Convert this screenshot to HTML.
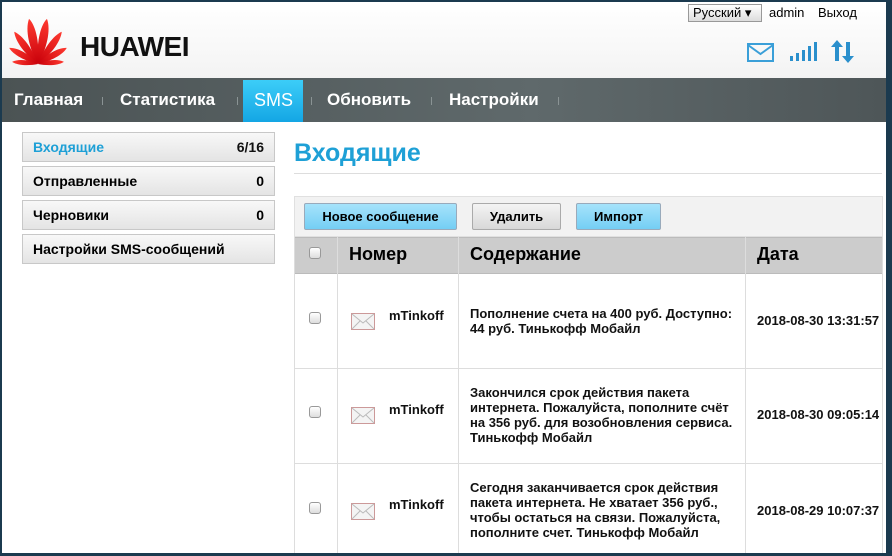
<!DOCTYPE html>
<html><head><meta charset="utf-8"><style>
*{margin:0;padding:0;box-sizing:border-box}
body{width:892px;height:556px;overflow:hidden;background:#1b3a4f;font-family:"Liberation Sans",sans-serif;position:relative}
.page{position:absolute;left:2px;top:2px;width:884px;height:551px;background:#fff;overflow:hidden}
.abs{position:absolute}
.hdr{left:0;top:0;width:884px;height:76px;background:linear-gradient(#fff,#f3f3f3)}
.nav{left:0;top:76px;width:884px;height:44px;background:linear-gradient(90deg,#4b5354,#5f696b 60%,#4e5658)}
.nav span{position:absolute;top:0;height:44px;line-height:44px;color:#fff;font-weight:bold;font-size:17px}
.sep{position:absolute;top:19px;width:1px;height:8px;background:#8a9394}
.side{position:absolute;left:20px;width:253px;height:30px;border:1px solid #c8c8c8;background:linear-gradient(#f8f8f8,#e4e4e4);font-size:14px;font-weight:bold;line-height:28px;padding:0 10px}
.side b{float:right}
.btn{position:absolute;top:201px;height:27px;border:1px solid #9ab;border-radius:2px;font-size:13px;font-weight:bold;line-height:25px;text-align:center}
.col{position:absolute;top:235px;width:1px;height:320px;background:#ddd}
.hrow{position:absolute;left:293px;width:588px;height:1px;background:#ddd}
.cb{position:absolute;width:12px;height:12px;border:1px solid #999;border-radius:3px;background:linear-gradient(#fff,#ddd)}
.t{position:absolute;font-size:13px;font-weight:bold;color:#111;line-height:15px}
.env{position:absolute;width:24px;height:17px}
</style></head><body><div class="page">
<div class="abs hdr"></div>
<svg class="abs" style="left:4px;top:10px" width="66" height="54" viewBox="0 0 66 54">
<defs><linearGradient id="g" x1="0" y1="1" x2="0" y2="0"><stop offset="0" stop-color="#c8000a"/><stop offset="1" stop-color="#ff3a30"/></linearGradient></defs>
<g fill="url(#g)" transform="translate(32,52)">
<path d="M0 0 C-6 -16 -7 -36 -1 -46 C5 -38 5 -18 0 0Z" transform="rotate(-10)"/>
<path d="M0 0 C-6 -16 -7 -36 -1 -46 C5 -38 5 -18 0 0Z" transform="rotate(10) scale(-1,1)"/>
<path d="M0 0 C-5 -14 -6 -31 -1 -40 C4 -32 4 -15 0 0Z" transform="rotate(-35)"/>
<path d="M0 0 C-5 -14 -6 -31 -1 -40 C4 -32 4 -15 0 0Z" transform="rotate(35) scale(-1,1)"/>
<path d="M0 0 C-4 -12 -5 -26 -1 -33 C4 -26 4 -12 0 0Z" transform="rotate(-59)"/>
<path d="M0 0 C-4 -12 -5 -26 -1 -33 C4 -26 4 -12 0 0Z" transform="rotate(59) scale(-1,1)"/>
<path d="M0 0 C-3 -9 -4 -20 -1 -26 C3 -20 3 -9 0 0Z" transform="rotate(-83)"/>
<path d="M0 0 C-3 -9 -4 -20 -1 -26 C3 -20 3 -9 0 0Z" transform="rotate(83) scale(-1,1)"/>
</g></svg>
<div class="abs" style="left:78px;top:29px;font-size:28px;font-weight:bold;color:#111;letter-spacing:-0.5px">HUAWEI</div>
<div class="abs" style="left:686px;top:2px;width:74px;height:18px;border:1px solid #999;background:linear-gradient(#fff,#ddd);font-size:13px;line-height:16px;padding-left:4px">Русский ▾</div>
<div class="abs" style="left:767px;top:3px;font-size:13px">admin</div>
<div class="abs" style="left:816px;top:3px;font-size:13px">Выход</div>
<svg class="abs" style="left:745px;top:41px" width="28" height="20"><rect x="1" y="1" width="25" height="17" fill="none" stroke="#3a9fd8" stroke-width="2"/><path d="M1 2 L13.5 11 L26 2" fill="none" stroke="#3a9fd8" stroke-width="2"/></svg>
<svg class="abs" style="left:788px;top:39px" width="28" height="22" fill="#2a8fcc"><rect x="0" y="15" width="3" height="5"/><rect x="6" y="12" width="3" height="8"/><rect x="12" y="9" width="3" height="11"/><rect x="18" y="5" width="3" height="15"/><rect x="24" y="1" width="3" height="19"/></svg>
<svg class="abs" style="left:829px;top:38px" width="24" height="24" fill="#2a8fcc"><path d="M6 0 L12 7 H8 V21 H4 V7 H0Z"/><path d="M17 23 L11 16 H15 V2 H19 V16 H23Z"/></svg>
<div class="abs nav">
<span style="left:12px">Главная</span><div class="sep" style="left:100px"></div>
<span style="left:118px">Статистика</span><div class="sep" style="left:235px"></div>
<div class="abs" style="left:241px;top:2px;width:60px;height:42px;background:linear-gradient(#3ccdf8,#14a6e4)"></div>
<span style="left:252px;font-weight:normal;font-size:18px">SMS</span><div class="sep" style="left:309px"></div>
<span style="left:325px">Обновить</span><div class="sep" style="left:429px"></div>
<span style="left:447px">Настройки</span><div class="sep" style="left:556px"></div>
</div>
<div class="side" style="top:130px;color:#1ea0d6">Входящие<b style="color:#111">6/16</b></div>
<div class="side" style="top:164px">Отправленные<b>0</b></div>
<div class="side" style="top:198px">Черновики<b>0</b></div>
<div class="side" style="top:232px">Настройки SMS-сообщений</div>
<div class="abs" style="left:292px;top:137px;font-size:25px;font-weight:bold;color:#1ea0d6">Входящие</div>
<div class="abs" style="left:292px;top:171px;width:588px;height:1px;background:#ddd"></div>
<div class="abs" style="left:292px;top:194px;width:589px;height:41px;background:#f2f2f2;border:1px solid #e0e0e0"></div>
<div class="btn" style="left:302px;width:153px;background:linear-gradient(#a6e3fb,#74cef4)">Новое сообщение</div>
<div class="btn" style="left:470px;width:89px;background:linear-gradient(#f4f4f4,#d8d8d8);border-color:#aaa">Удалить</div>
<div class="btn" style="left:574px;width:85px;background:linear-gradient(#a6e3fb,#74cef4)">Импорт</div>
<div class="abs" style="left:292px;top:235px;width:589px;height:37px;background:#ccc;border:1px solid #bbb"></div>
<div class="cb" style="left:307px;top:245px"></div>
<div class="abs" style="left:347px;top:242px;font-size:18px;font-weight:bold">Номер</div>
<div class="abs" style="left:468px;top:242px;font-size:18px;font-weight:bold">Содержание</div>
<div class="abs" style="left:755px;top:242px;font-size:18px;font-weight:bold">Дата</div>
<div class="col" style="left:292px"></div><div class="col" style="left:335px"></div><div class="col" style="left:456px"></div><div class="col" style="left:743px"></div><div class="col" style="left:880px"></div>
<div class="hrow" style="top:366px"></div><div class="hrow" style="top:461px"></div>

<div class="cb" style="left:307px;top:310px"></div>
<svg class="env" style="left:349px;top:311px"><rect x="0.5" y="0.5" width="23" height="16" fill="#f4f4f4" stroke="#c99"/><path d="M1 1 L12 10 L23 1 M1 16 L9 8 M23 16 L15 8" fill="none" stroke="#bbb"/></svg>
<div class="t" style="left:387px;top:306px">mTinkoff</div>
<div class="t" style="left:468px;top:304px">Пополнение счета на 400 руб. Доступно:<br>44 руб. Тинькофф Мобайл</div>
<div class="t" style="left:755px;top:311px">2018-08-30 13:31:57</div>

<div class="cb" style="left:307px;top:404px"></div>
<svg class="env" style="left:349px;top:405px"><rect x="0.5" y="0.5" width="23" height="16" fill="#f4f4f4" stroke="#c99"/><path d="M1 1 L12 10 L23 1 M1 16 L9 8 M23 16 L15 8" fill="none" stroke="#bbb"/></svg>
<div class="t" style="left:387px;top:400px">mTinkoff</div>
<div class="t" style="left:468px;top:383px">Закончился срок действия пакета<br>интернета. Пожалуйста, пополните счёт<br>на 356 руб. для возобновления сервиса.<br>Тинькофф Мобайл</div>
<div class="t" style="left:755px;top:405px">2018-08-30 09:05:14</div>

<div class="cb" style="left:307px;top:500px"></div>
<svg class="env" style="left:349px;top:501px"><rect x="0.5" y="0.5" width="23" height="16" fill="#f4f4f4" stroke="#c99"/><path d="M1 1 L12 10 L23 1 M1 16 L9 8 M23 16 L15 8" fill="none" stroke="#bbb"/></svg>
<div class="t" style="left:387px;top:495px">mTinkoff</div>
<div class="t" style="left:468px;top:478px">Сегодня заканчивается срок действия<br>пакета интернета. Не хватает 356 руб.,<br>чтобы остаться на связи. Пожалуйста,<br>пополните счет. Тинькофф Мобайл</div>
<div class="t" style="left:755px;top:501px">2018-08-29 10:07:37</div>
</div></body></html>
